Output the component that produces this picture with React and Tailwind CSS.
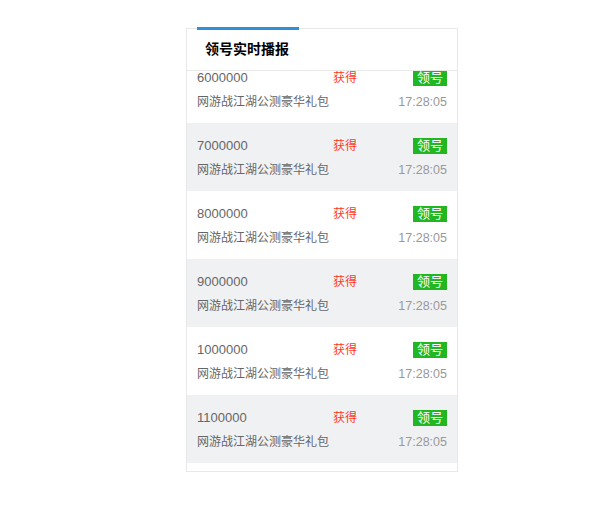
import React from 'react';

const rows = [
  { id: '6000000' },
  { id: '7000000' },
  { id: '8000000' },
  { id: '9000000' },
  { id: '1000000' },
  { id: '1100000' },
];

const App = () => {
  return (
    <div
      className="w-[598px] h-[512px] bg-white pt-[28px] pl-[186px]"
      style={{ fontFamily: '"Liberation Sans", "Noto Sans CJK SC", sans-serif' }}
    >
      <div className="relative w-[272px] border border-[#e8e8e8] bg-white">
        <div className="absolute -top-[2px] left-[10px] w-[102px] h-[3px] bg-[#2f8fd8]" />
        <div className="h-[42px] border-b border-[#e8e8e8] flex items-center pl-[18px]">
          <span className="text-[14px] font-bold text-black">领号实时播报</span>
        </div>
        <div className="h-[400px] overflow-hidden">
          <div className="-mt-[16px]">
            {rows.map((row, index) => (
              <div
                key={index}
                className={`h-[68px] px-[10px] pt-[13px] pb-[11px] flex flex-col gap-[4px] ${index % 2 === 1 ? 'bg-[#f0f1f3]' : 'bg-white'}`}
              >
                <div className="h-[20px] flex items-center">
                  <span className="w-[136px] text-[13px] text-[#666]">{row.id}</span>
                  <span className="flex-1 text-[12px] text-[#ff3a1a]">获得</span>
                  <span className="h-[16px] w-[34px] flex items-center justify-center bg-[#22b722] text-white text-[13px]">
                    领号
                  </span>
                </div>
                <div className="h-[20px] flex items-center justify-between">
                  <span className="text-[12px] text-[#666]">网游战江湖公测豪华礼包</span>
                  <span className="text-[12.5px] text-[#999]">17:28:05</span>
                </div>
              </div>
            ))}
          </div>
        </div>
      </div>
    </div>
  );
};

export default App;
